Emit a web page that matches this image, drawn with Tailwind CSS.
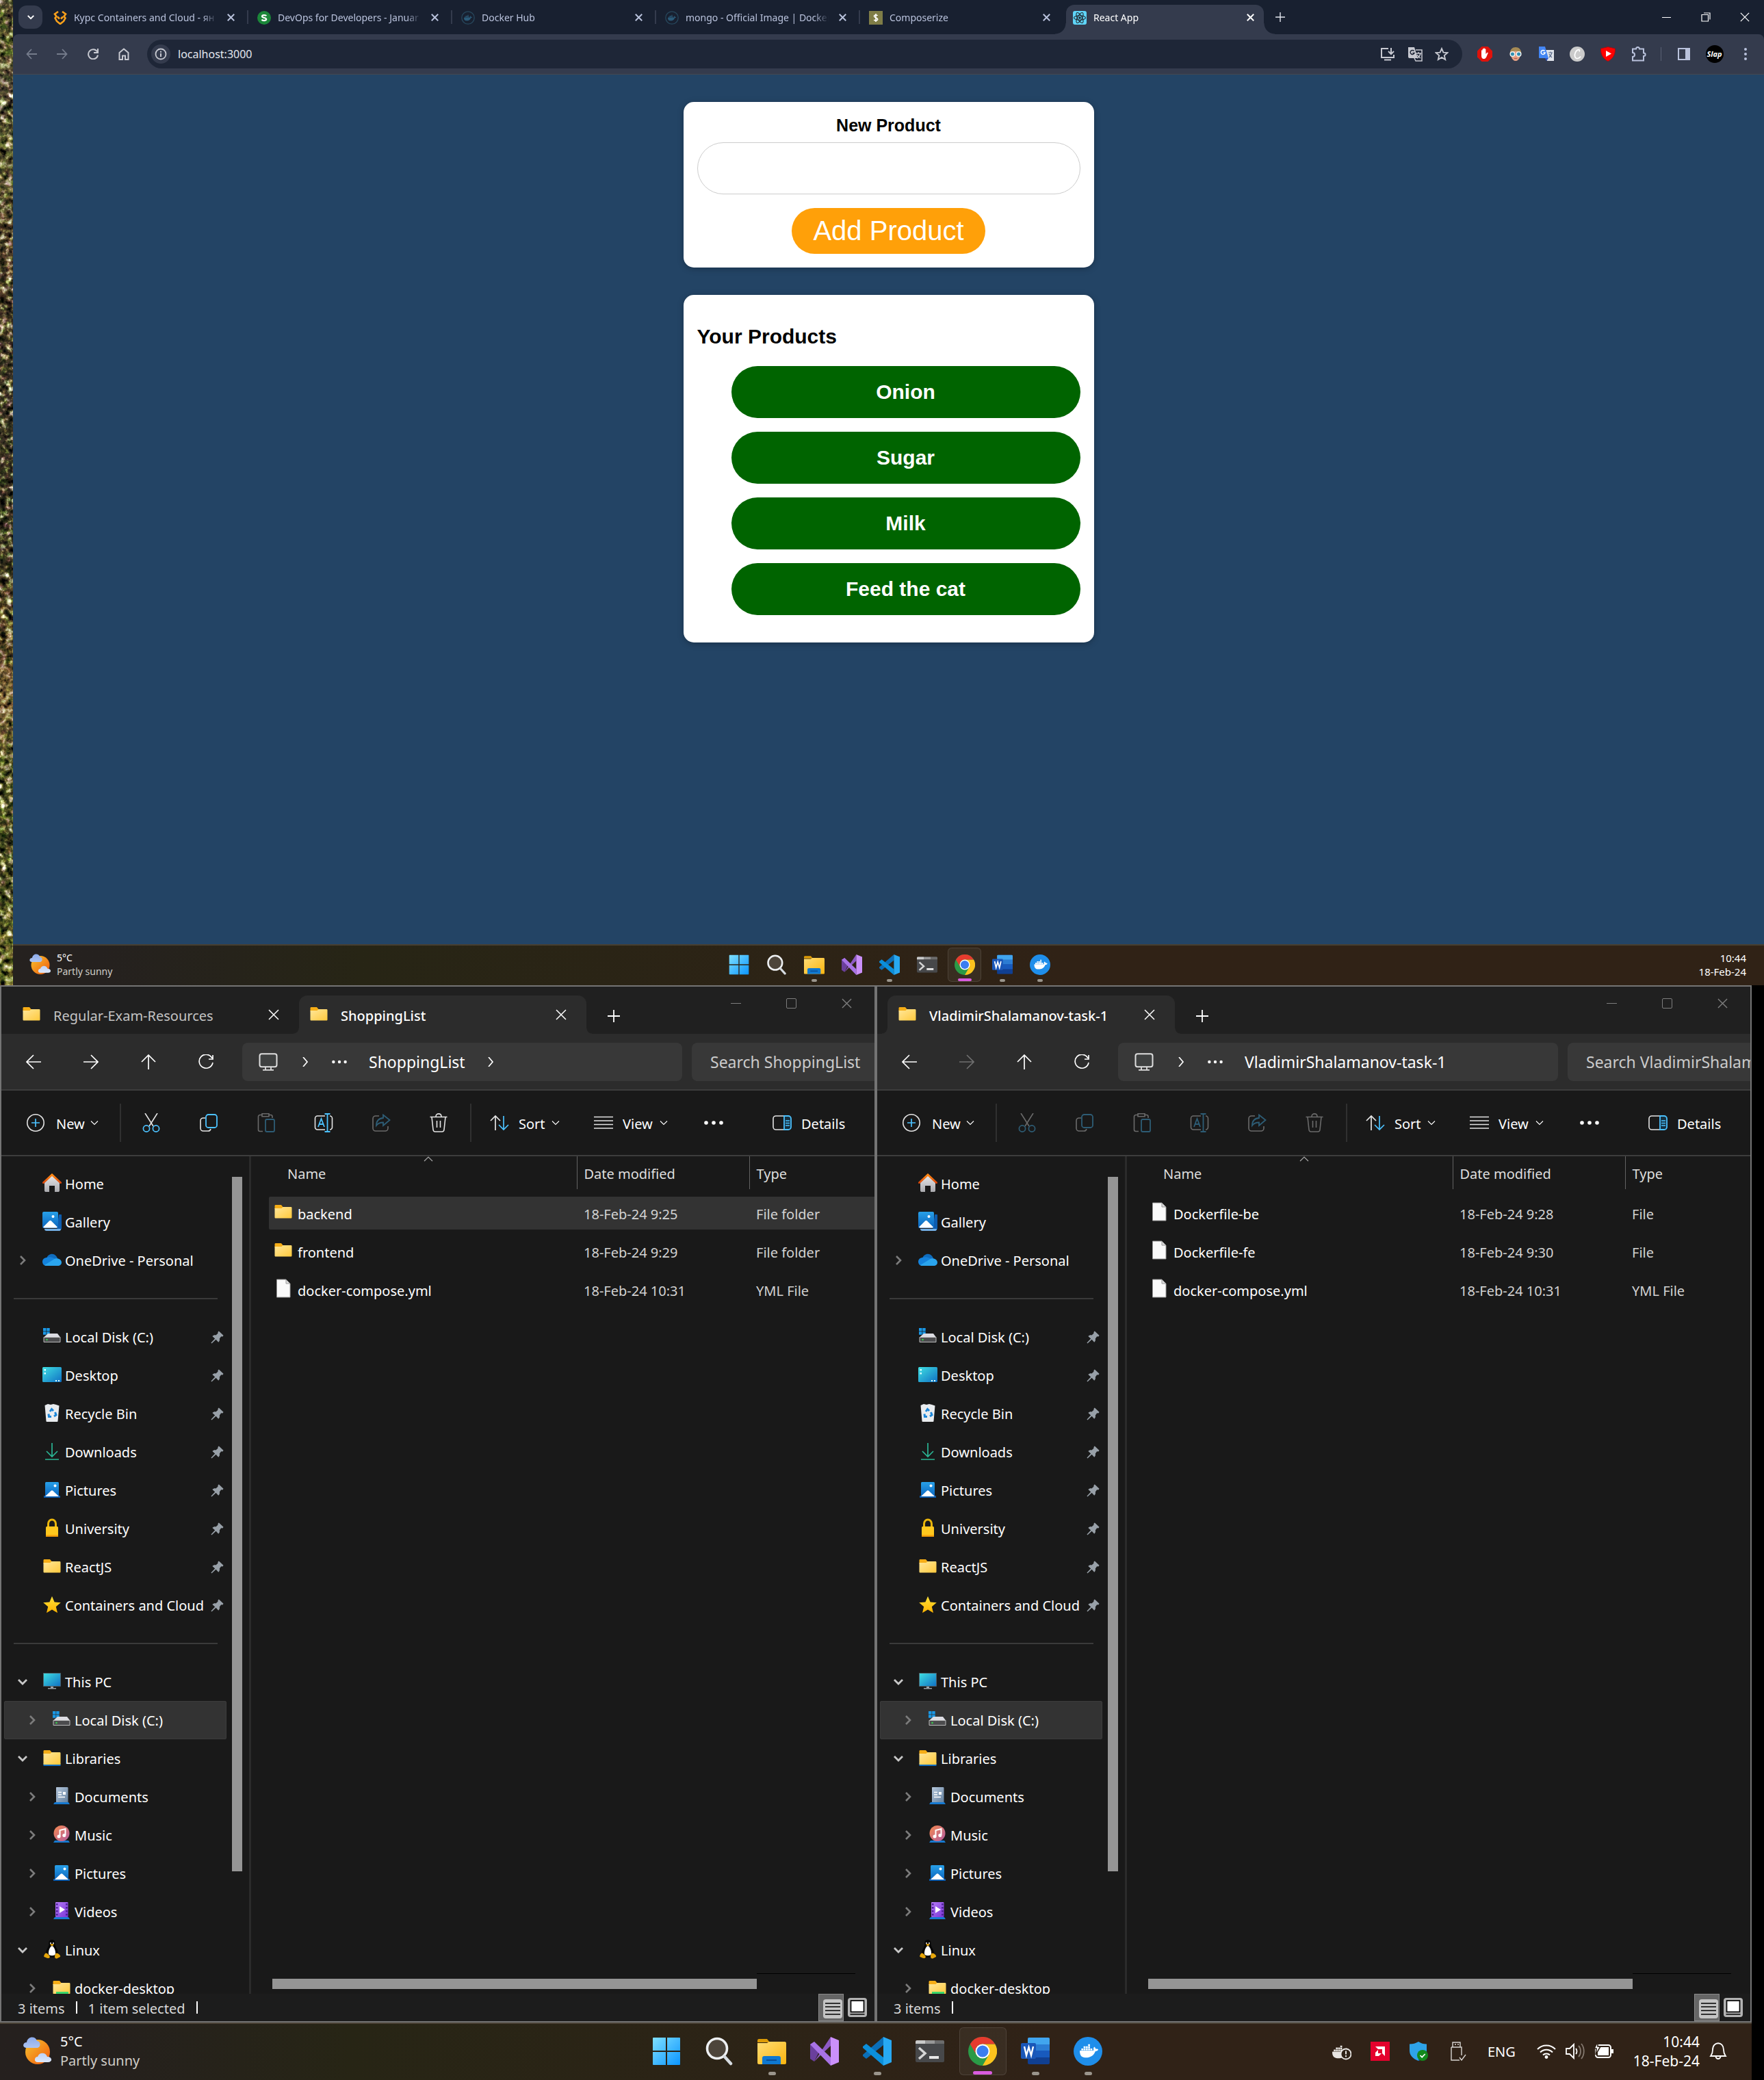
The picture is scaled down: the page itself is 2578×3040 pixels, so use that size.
<!DOCTYPE html>
<html lang="en">
<head>
<meta charset="utf-8">
<title>React App</title>
<script src="https://cdn.jsdelivr.net/npm/@tailwindcss/browser@4"></script>
</head>
<body class="grid h-screen grid-rows-[minmax(0,9fr)_minmax(0,10fr)] overflow-hidden bg-black font-['Noto_Sans',sans-serif] text-white">

<!-- Icon library -->
<svg class="absolute size-0" aria-hidden="true">
  <defs>
    <linearGradient id="g-folder" x1="0" y1="0" x2="1" y2="1"><stop offset="0" stop-color="#ffe79b"/><stop offset="1" stop-color="#ffc93c"/></linearGradient>
    <linearGradient id="g-explorer" x1="0" y1="0" x2="1" y2="1"><stop offset="0" stop-color="#ffdd75"/><stop offset="1" stop-color="#fbb50f"/></linearGradient>
    <linearGradient id="g-blue" x1="0" y1="0" x2="0" y2="1"><stop offset="0" stop-color="#28a0e8"/><stop offset="1" stop-color="#0a63bd"/></linearGradient>
    <linearGradient id="g-desk" x1="0" y1="0" x2="1" y2="1"><stop offset="0" stop-color="#3fe0e2"/><stop offset="1" stop-color="#1070c4"/></linearGradient>
    <linearGradient id="g-win" x1="0" y1="0" x2="1" y2="1"><stop offset="0" stop-color="#7fe0ff"/><stop offset="1" stop-color="#0b95ff"/></linearGradient>
    <linearGradient id="g-gray" x1="0" y1="0" x2="0" y2="1"><stop offset="0" stop-color="#e8e8ea"/><stop offset="1" stop-color="#a9a9ad"/></linearGradient>
    <linearGradient id="g-roof" x1="0" y1="0" x2="0" y2="1"><stop offset="0" stop-color="#ff8a14"/><stop offset="1" stop-color="#d9480b"/></linearGradient>
    <linearGradient id="g-music" x1="0" y1="0" x2="1" y2="1"><stop offset="0" stop-color="#f5894f"/><stop offset="1" stop-color="#b45ca0"/></linearGradient>
    <linearGradient id="g-video" x1="0" y1="0" x2="1" y2="1"><stop offset="0" stop-color="#b57bf5"/><stop offset="1" stop-color="#7a34d8"/></linearGradient>
    <linearGradient id="g-doc" x1="0" y1="0" x2="1" y2="1"><stop offset="0" stop-color="#b5c7dc"/><stop offset="1" stop-color="#64819f"/></linearGradient>
    <linearGradient id="g-sun" x1="0" y1="0" x2="1" y2="1"><stop offset="0" stop-color="#f7c52f"/><stop offset="1" stop-color="#f0580c"/></linearGradient>
    <linearGradient id="g-cloud" x1="0" y1="0" x2="0" y2="1"><stop offset="0" stop-color="#8cabeb"/><stop offset="1" stop-color="#dbe7fa"/></linearGradient>
    <linearGradient id="g-star" x1="0" y1="0" x2="0" y2="1"><stop offset="0" stop-color="#ffe23a"/><stop offset="1" stop-color="#ffb300"/></linearGradient>
    <linearGradient id="g-forest" x1="0" y1="0" x2="0" y2="1">
      <stop offset="0" stop-color="#5a5138"/><stop offset=".05" stop-color="#6b6c38"/><stop offset=".08" stop-color="#54493c"/><stop offset=".15" stop-color="#626238"/>
      <stop offset=".25" stop-color="#5a4632"/><stop offset=".38" stop-color="#443a2c"/><stop offset=".55" stop-color="#403a28"/><stop offset=".66" stop-color="#66542f"/>
      <stop offset=".71" stop-color="#8a6c44"/><stop offset=".78" stop-color="#55562a"/><stop offset=".88" stop-color="#505028"/><stop offset="1" stop-color="#7c7c34"/>
    </linearGradient>
    <filter id="leaves" x="0" y="0" width="100%" height="100%" color-interpolation-filters="sRGB">
      <feTurbulence type="fractalNoise" baseFrequency=".11" numOctaves="4" seed="4" result="n"/>
      <feColorMatrix in="n" values="1.5 .8 0 0 -.68  1.3 1 0 0 -.68  1.3 .7 .2 0 -.68  0 0 0 0 1" result="m"/>
      <feBlend in="m" in2="SourceGraphic" mode="hard-light"/>
    </filter>
  </defs>

  <symbol id="whale" viewBox="0 0 24 24"><path fill="currentColor" d="M13.983 11.078h2.119a.186.186 0 00.186-.185V9.006a.186.186 0 00-.186-.186h-2.119a.185.185 0 00-.185.185v1.888c0 .102.083.185.185.185m-2.954-5.43h2.118a.186.186 0 00.186-.186V3.574a.186.186 0 00-.186-.185h-2.118a.185.185 0 00-.185.185v1.888c0 .102.082.185.185.185m0 2.716h2.118a.187.187 0 00.186-.186V6.29a.186.186 0 00-.186-.185h-2.118a.185.185 0 00-.185.185v1.887c0 .102.082.185.185.186m-2.93 0h2.12a.186.186 0 00.184-.186V6.29a.185.185 0 00-.185-.185H8.1a.185.185 0 00-.185.185v1.887c0 .102.083.185.185.186m-2.964 0h2.119a.186.186 0 00.185-.186V6.29a.185.185 0 00-.185-.185H5.136a.186.186 0 00-.186.185v1.887c0 .102.084.185.186.186m5.893 2.715h2.118a.186.186 0 00.186-.185V9.006a.186.186 0 00-.186-.186h-2.118a.185.185 0 00-.185.185v1.888c0 .102.082.185.185.185m-2.93 0h2.12a.185.185 0 00.184-.185V9.006a.185.185 0 00-.184-.186h-2.12a.185.185 0 00-.184.185v1.888c0 .102.083.185.185.185m-2.964 0h2.119a.185.185 0 00.185-.185V9.006a.185.185 0 00-.184-.186h-2.12a.186.186 0 00-.186.186v1.887c0 .102.084.185.186.185m-2.92 0h2.12a.185.185 0 00.184-.185V9.006a.185.185 0 00-.184-.186h-2.12a.185.185 0 00-.184.185v1.888c0 .102.082.185.185.185M23.763 9.89c-.065-.051-.672-.51-1.954-.51-.338.001-.676.03-1.01.087-.248-1.7-1.653-2.53-1.716-2.566l-.344-.199-.226.327c-.284.438-.49.922-.612 1.43-.23.97-.09 1.882.403 2.661-.595.332-1.55.413-1.744.42H.751a.751.751 0 00-.75.748 11.376 11.376 0 00.692 4.062c.545 1.428 1.355 2.48 2.41 3.124 1.18.723 3.1 1.137 5.275 1.137.983.003 1.963-.086 2.93-.266a12.248 12.248 0 003.823-1.389c.98-.567 1.86-1.288 2.61-2.136 1.252-1.418 1.998-2.997 2.553-4.4h.221c1.372 0 2.215-.549 2.68-1.009.309-.293.55-.65.707-1.046l.098-.288Z"/></symbol>

  <!-- Favicons -->
  <symbol id="fav-softuni" viewBox="0 0 20 20"><path fill="none" stroke="#f9a01b" stroke-width="2.600" d="M7 1 2 4.500l2.500 3.500L2.500 10.500l2.500 4.500 5 4 5-4 2.500-4.500L15.500 8 18 4.500 13 1M6 8.500 9 11.500M14 8.500l-3 3"/></symbol>
  <symbol id="fav-s" viewBox="0 0 20 20"><circle cx="10" cy="10" r="10" fill="#1b8739"/><path fill="none" stroke="#fff" stroke-width="2.200" d="M13.200 7.300C12.500 5.800 7 5.300 7 7.900s6.200 1.500 6.200 4.200-5.700 2.300-6.500.4"/></symbol>
  <symbol id="fav-docker" viewBox="0 0 20 20"><circle cx="10" cy="10" r="9.200" fill="none" stroke="#27475c" stroke-width="1.300"/><use href="#whale" x="4" y="4" width="12" height="12" color="#2b5a78"/></symbol>
  <symbol id="fav-dollar" viewBox="0 0 20 20"><path fill="#7f7d47" d="M0 0h20v20H0z"/><path fill="none" stroke="#fff" stroke-width="1.600" d="M12.500 7C12 5.500 7.500 5.500 7.500 7.800s5.200 1.900 5.200 4.300-4.700 2.400-5.300.6M10 4v12"/></symbol>
  <symbol id="fav-react" viewBox="0 0 20 20"><rect width="20" height="20" rx="3" fill="#5fd5f8"/><g fill="none" stroke="#20232a" stroke-width="1.100"><ellipse cx="10" cy="10" rx="8.500" ry="3.300"/><ellipse cx="10" cy="10" rx="8.500" ry="3.300" transform="rotate(60 10 10)"/><ellipse cx="10" cy="10" rx="8.500" ry="3.300" transform="rotate(120 10 10)"/></g><circle cx="10" cy="10" r="1.700" fill="#20232a"/></symbol>

  <!-- Line icons -->
  <symbol id="x" viewBox="0 0 16 16"><path fill="none" stroke="currentColor" stroke-width="1.500" d="m1 1 14 14M15 1 1 15"/></symbol>
  <symbol id="x-b" viewBox="0 0 10 10"><path fill="none" stroke="currentColor" stroke-width="1.800" d="m.7.7 8.600 8.600M9.300.7.7 9.300"/></symbol>
  <symbol id="plus" viewBox="0 0 16 16"><path fill="none" stroke="currentColor" stroke-width="1.600" d="M8 0v16M0 8h16"/></symbol>
  <symbol id="down" viewBox="0 0 12 12"><path fill="none" stroke="currentColor" stroke-width="1.100" d="m1 3.500 5 5 5-5"/></symbol>
  <symbol id="down-b" viewBox="0 0 14 14"><path fill="none" stroke="currentColor" stroke-width="2.800" d="m1 4 6 6 6-6"/></symbol>
  <symbol id="right-b" viewBox="0 0 14 14"><path fill="none" stroke="currentColor" stroke-width="2.600" d="m4 1 6 6-6 6"/></symbol>
  <symbol id="right" viewBox="0 0 14 14"><path fill="none" stroke="currentColor" stroke-width="1.700" d="m4 0 6 7-6 7"/></symbol>
  <symbol id="arrow-l" viewBox="0 0 22 22"><path fill="none" stroke="currentColor" stroke-width="1.700" d="M22 11H1M11 1 1 11l10 10"/></symbol>
  <symbol id="arrow-r" viewBox="0 0 22 22"><path fill="none" stroke="currentColor" stroke-width="1.700" d="M0 11h21M11 1l10 10-10 10"/></symbol>
  <symbol id="arrow-u" viewBox="0 0 22 22"><path fill="none" stroke="currentColor" stroke-width="1.700" d="M11 22V1M1 11 11 1l10 10"/></symbol>
  <symbol id="reload" viewBox="0 0 22 22"><path fill="none" stroke="currentColor" stroke-width="1.700" d="M20 5.500A10 10 0 1 0 21 12M21 1v6h-6"/></symbol>
  <symbol id="ch-l" viewBox="0 0 16 16"><path fill="none" stroke="currentColor" stroke-width="1.800" d="M16 8H1.500M8 1 1.500 8 8 15"/></symbol>
  <symbol id="ch-r" viewBox="0 0 16 16"><path fill="none" stroke="currentColor" stroke-width="1.800" d="M0 8h14.500M8 1l6.500 7L8 15"/></symbol>
  <symbol id="ch-reload" viewBox="0 0 16 16"><path fill="none" stroke="currentColor" stroke-width="2" d="M14 4.500a7 7 0 1 0 1 5M15 0v6H9"/></symbol>
  <symbol id="ch-home" viewBox="0 0 16 18"><path fill="none" stroke="currentColor" stroke-width="2" d="M1.500 7 8 1.500 14.500 7v10H10v-5.500H6V17H1.500z"/></symbol>
  <symbol id="info" viewBox="0 0 18 18"><circle cx="9" cy="9" r="7.500" fill="none" stroke="currentColor" stroke-width="1.800"/><path stroke="currentColor" stroke-width="2" d="M9 8v5M9 4.800v2"/></symbol>
  <symbol id="install" viewBox="0 0 22 20"><path fill="none" stroke="currentColor" stroke-width="2" d="M12 2H2v13h18v-4M16 1v9m-4-4 4 4 4-4M6 18.500h10"/></symbol>
  <symbol id="translate" viewBox="0 0 22 22"><path fill="#c7c9d1" d="M1 1h9l5 16H3a2 2 0 0 1-2-2z"/><path fill="none" stroke="#c7c9d1" stroke-width="1.500" d="M12 5h9v16h-9l-2-4M12 10h8M16 8v2m3 0c-1 4-3 6-5 7m0-5c1 2 2 3 5 5"/><path fill="none" stroke="#1e2637" stroke-width="1.500" d="M9.500 6.500a3 3 0 1 0 .5 3H7.500"/></symbol>
  <symbol id="star-o" viewBox="0 0 20 20"><path fill="none" stroke="currentColor" stroke-width="1.900" d="m10 2 2.400 5.600 6 .5-4.600 4 1.400 5.900L10 14.900 4.800 18l1.400-5.900-4.600-4 6-.5z"/></symbol>
  <symbol id="adblock" viewBox="0 0 22 22"><path fill="#e0120b" d="M6.500 0h9L22 6.500v9L15.500 22h-9L0 15.500v-9z"/><path fill="#fff" d="M6 11V6c0-1 1.500-1 1.500 0V4c0-1 1.600-1 1.600 0V3c0-1 1.700-1 1.700 0v1c0-1 1.600-1 1.600 0v7l1.800-2c1-.8 1.900 0 1.300 1-1.500 3-2.500 8-5.500 8S6 16 6 13z"/></symbol>
  <symbol id="face" viewBox="0 0 22 22"><path fill="#a58a55" d="M2 10C2 3 6 0 11 0s9 3 9 10l-1 4H3z"/><path fill="#e4a184" d="M4 9c2-4 12-4 14 0v6c-1 4-4 7-7 7s-6-3-7-7z"/><g fill="#2f8fb0" stroke="#f2f2f2" stroke-width="1.600"><circle cx="6" cy="11" r="3.600"/><circle cx="16" cy="11" r="3.600"/></g><path stroke="#b3534c" stroke-width="1.300" d="M8.500 18h5"/></symbol>
  <symbol id="gtrans" viewBox="0 0 22 22"><path fill="#dfe3ea" d="M9 5h13v16H12z"/><path fill="#4486f4" d="M0 0h9l5 17H1a1 1 0 0 1-1-1z"/><path fill="#2a50c8" d="M9 17h5l-3 4z"/><path fill="none" stroke="#fff" stroke-width="1.500" d="M8.500 6.500a3 3 0 1 0 .6 2.500H6.500"/><path fill="none" stroke="#5b6b8a" stroke-width="1.200" d="M14 9h6m-3-1.500V9m2 0c-1 4-2 5-4 7m0-5c1 2 3 4 4 5"/></symbol>
  <symbol id="cglyph" viewBox="0 0 22 22"><circle cx="11" cy="11" r="11" fill="#cbcbcb"/><path fill="none" stroke="#fff" stroke-width="1.700" d="M14 7.500c2-4-3-4-5.500 1S8 18 11.500 17.500s4-2 4.500-3"/></symbol>
  <symbol id="ytshield" viewBox="0 0 22 22"><path fill="#f00" stroke="#991016" stroke-width="1" d="M11 .5 21.500 3c.5 9-4 15.500-10.500 18.500C4.500 18.500 0 12 .5 3z"/><path fill="#fff" d="m8 6 8 4.500L8 15z"/></symbol>
  <symbol id="puzzle" viewBox="0 0 22 22"><path fill="none" stroke="#b9c2dc" stroke-width="2" d="M2 3.500h5c0-3.500 5-3.500 5 0h6v6c3.500 0 3.500 4.500 0 4.500v6.500H2v-5.500c4 0 4-6 0-6z"/></symbol>
  <symbol id="sidepanel" viewBox="0 0 18 18"><rect x="1" y="1" width="16" height="16" fill="none" stroke="#b9c2dc" stroke-width="2"/><path fill="#b9c2dc" d="M11 1h6v16h-6z"/></symbol>

  <!-- Explorer toolbar -->
  <symbol id="monitor" viewBox="0 0 28 26"><rect x="1.500" y="1.200" width="25" height="19" rx="3" fill="#3f4141" stroke="#dedede" stroke-width="2"/><path stroke="#dedede" stroke-width="1.800" d="M10 21v3m8-3v3M6 24.800h16"/></symbol>
  <symbol id="dots" viewBox="0 0 28 28"><g fill="currentColor"><circle cx="3" cy="14" r="2.800"/><circle cx="14" cy="14" r="2.800"/><circle cx="25" cy="14" r="2.800"/></g></symbol>
  <symbol id="new" viewBox="0 0 28 28"><circle cx="14" cy="14" r="12.200" fill="none" stroke="#e4e4e4" stroke-width="1.600"/><path stroke="#4cc2ff" stroke-width="1.700" d="M14 8v12M8 14h12"/></symbol>
  <symbol id="cut" viewBox="0 0 28 28"><path stroke="#e4e4e4" stroke-width="1.600" d="m5 0 12 19M23 0 11 19"/><g fill="none" stroke="#4cc2ff" stroke-width="1.700"><circle cx="7" cy="22.500" r="4.600"/><circle cx="21" cy="22.500" r="4.600"/></g></symbol>
  <symbol id="copy" viewBox="0 0 28 28"><path fill="none" stroke="#e4e4e4" stroke-width="1.600" d="M9 7H6a4 4 0 0 0-4 4v11a4 4 0 0 0 4 4h7a4 4 0 0 0 4-3"/><rect x="10" y="2" width="16" height="19" rx="3.500" fill="none" stroke="#4cc2ff" stroke-width="1.800"/></symbol>
  <symbol id="paste" viewBox="0 0 28 28"><path fill="none" stroke="#e4e4e4" stroke-width="1.600" d="M9 26.500H5a2.500 2.500 0 0 1-2.500-2.500V5A2.500 2.500 0 0 1 5 2.500h3m10 0h3A2.500 2.500 0 0 1 23 5v2M8 .8h10v4H8z"/><rect x="13" y="9" width="13" height="18" rx="2" fill="none" stroke="#4cc2ff" stroke-width="1.800"/></symbol>
  <symbol id="rename" viewBox="0 0 28 28"><path fill="none" stroke="#e4e4e4" stroke-width="1.600" d="M16 4H5a3.500 3.500 0 0 0-3.500 3.500v13A3.500 3.500 0 0 0 5 24h11m7-20a3.500 3.500 0 0 1 3.500 3.500v13A3.500 3.500 0 0 1 23 24"/><path fill="none" stroke="#4cc2ff" stroke-width="1.800" d="m6 20 4.500-12L15 20m-7.500-4h6M19.500 1v26M15.500 1h8m-8 26h8"/></symbol>
  <symbol id="share" viewBox="0 0 28 28"><path fill="none" stroke="#e4e4e4" stroke-width="1.600" d="M11 4H6a4 4 0 0 0-4 4v14a4 4 0 0 0 4 4h14a4 4 0 0 0 4-4v-3"/><path fill="none" stroke="#4cc2ff" stroke-width="1.800" d="M17 2.500 26.500 10 17 18v-4.500c-5 0-7.500 1-10 4.500 0-7 3.500-10.500 10-11z"/></symbol>
  <symbol id="trash" viewBox="0 0 28 28"><path fill="none" stroke="#e4e4e4" stroke-width="1.600" d="M1.500 5.500h25M10 5c0-5.500 8-5.500 8 0M4 5.500 6 24c.2 2 1 3 3 3h10c2 0 2.800-1 3-3l2-18.500M11.500 11v10M16.500 11v10"/></symbol>
  <symbol id="sort" viewBox="0 0 28 24"><path fill="none" stroke="#e4e4e4" stroke-width="1.700" d="M8 23V2M1 9l7-7 7 7"/><path fill="none" stroke="#4cc2ff" stroke-width="1.700" d="M20 2v20m-7-7 7 7 7-7"/></symbol>
  <symbol id="view" viewBox="0 0 28 20"><path stroke="#e4e4e4" stroke-width="1.600" d="M0 1.500h28M0 7h28M0 12.500h28M0 18h28"/></symbol>
  <symbol id="details" viewBox="0 0 28 22"><path fill="none" stroke="#e4e4e4" stroke-width="1.600" d="M17 1H5a4 4 0 0 0-4 4v12a4 4 0 0 0 4 4h12"/><path fill="#15303f" stroke="#4cc2ff" stroke-width="1.800" d="M17 1h6a4 4 0 0 1 4 4v12a4 4 0 0 1-4 4h-6z"/><path stroke="#4cc2ff" stroke-width="1.500" d="M19 8h6M19 11.500h6M19 15h6"/></symbol>

  <!-- File and place icons -->
  <symbol id="folder" viewBox="0 0 28 28"><path fill="#f5ad16" d="M1.500 5.500c0-1 .5-1.500 1.500-1.500h8l2.500 3H25v3H1.500z"/><path fill="url(#g-folder)" d="M1.500 9h10l2-2H25c1 0 1.500.5 1.500 1.500V22c0 1-.5 1.500-1.500 1.500H3c-1 0-1.500-.5-1.500-1.500z"/></symbol>
  <symbol id="file" viewBox="0 0 28 28"><path fill="#fafafa" stroke="#9a9a9a" d="M4.500 1h13.500l6 6v20h-19.500z"/><path fill="#dcdcdc" stroke="#9a9a9a" d="M18 1v6h6z"/></symbol>
  <symbol id="home" viewBox="0 0 28 28"><path fill="url(#g-gray)" d="M3 12 14 3l11 9v13c0 1.500-1 2-2 2h-5v-9h-8v9H5c-1 0-2-.5-2-2z"/><path fill="none" stroke="url(#g-roof)" stroke-width="3" stroke-linecap="round" d="M1.500 13.500 14 2l12.500 11.500"/></symbol>
  <symbol id="gallery" viewBox="0 0 28 28"><path fill="#0d5cae" d="M24 4h3c.6 0 1 .4 1 1v19c0 2-1 3-3 3h-4z"/><path fill="#74b0e6" d="M3 25h24c0 2-1 3-2 3H6c-2 0-3-1-3-3z"/><rect width="23" height="24" rx="2" fill="url(#g-blue)"/><path fill="#fff" d="m1 22.500 9-9c1-1 2-1 3 0l9 9c-1 1-1.500 1-2.500 1h-16c-1 0-2-.5-2.500-1z"/><circle cx="15.500" cy="7" r="2" fill="#fff"/></symbol>
  <symbol id="onedrive" viewBox="0 0 28 28"><path fill="#0f6cbd" d="M6 12C8 5 17 3 21 10l2 4-9 6z"/><path fill="#1482dc" d="M6 11C2 11.500 0 14 0 17s2 6 6 6l14-9C16 10 10 9.500 6 11z"/><path fill="#2aa5ee" d="M3 22 16 14c3-3 10-2 11.500 2 1.500 4-1 7-5 7H6c-1 0-2 0-3-1z"/></symbol>
  <symbol id="disk" viewBox="0 0 28 28"><path fill="#1a98e6" d="M1 2h4.500v4.500H1zm5.200 0h4.500v4.500H6.200zM1 7.200h4.500v4.500H1zm5.200 0h4.500v4.500H6.200z"/><path fill="#dcdce2" d="M8 10h14l4.500 6h-25z"/><path fill="#4c4c4e" stroke="#bababa" d="M2 15.500h24v7H2z"/><circle cx="6.500" cy="19" r="1.300" fill="#37d04c"/></symbol>
  <symbol id="desktop" viewBox="0 0 28 28"><rect y="3" width="28" height="22" rx="1.500" fill="url(#g-desk)"/><path fill="#dff" d="M2.500 6h2.500v2.500H2.500zm0 5h2.500v2.500H2.500zM19 22h2v2h-2zm4 0h2v2h-2z"/></symbol>
  <symbol id="recycle" viewBox="0 0 28 28"><path fill="#e9ecef" d="M3.500 3 8 1l4 1 4-1 4 1 4.500 1.500L22.500 26c0 .8-.5 1-1.500 1H7c-1 0-1.500-.2-1.500-1z"/><g fill="none" stroke="#1c86d8" stroke-width="3"><path d="m11 12 2.500-3.500L16 11M18.500 13l1.500 4-3 2M13 19.500H9.500l-.5-4"/></g></symbol>
  <symbol id="download" viewBox="0 0 28 28"><path fill="none" stroke="#2bb594" stroke-width="1.700" d="M14 2v20M6 14l8 8 8-8M4 26h20"/></symbol>
  <symbol id="picture" viewBox="0 0 28 28"><path fill="#0b58a8" d="M2 23h24v3H2z"/><rect x="4" y="3" width="20" height="22" rx="1.500" fill="url(#g-blue)"/><path fill="#fff" d="m4 24 8.500-8c1-1 2-1 3 0l8.500 8z"/><circle cx="18.500" cy="8.500" r="2" fill="#fff"/></symbol>
  <symbol id="lock" viewBox="0 0 28 28"><path fill="none" stroke="#e9b50b" stroke-width="3" d="M8.500 13V8a5.500 6 0 0 1 11 0v5"/><rect x="5" y="12" width="18" height="15" rx="1.500" fill="#ffc81e"/><path fill="#f59f0a" d="M5 24.500h18V27H5z"/></symbol>
  <symbol id="star" viewBox="0 0 28 28"><path fill="url(#g-star)" d="m14 2 3.600 8.400 9.200.8-7 6 2.200 9L14 21.500 6 26.200l2.200-9-7-6 9.200-.8z"/></symbol>
  <symbol id="pc" viewBox="0 0 28 28"><path fill="#9aa0a6" d="M12 22h4v2h4v1.500H8V24h4z"/><rect x="1.500" y="2.500" width="25" height="19" fill="url(#g-desk)" stroke="#566069" stroke-width=".8"/></symbol>
  <symbol id="library" viewBox="0 0 28 28"><path fill="#0f6fc4" d="M1.500 22h25v4h-25z"/><path fill="#f5ad16" d="M1.500 4.500c0-1 .5-1.500 1.500-1.500h8l2.500 3H25v3H1.500z"/><path fill="url(#g-folder)" d="M1.500 8h10l2-2H25c1 0 1.500.5 1.500 1.500V24h-25z"/></symbol>
  <symbol id="document" viewBox="0 0 28 28"><path fill="#1679d0" d="M4 23h20l2 3H2z"/><path fill="url(#g-doc)" d="M7 1h15c1 0 1.500.5 1.500 1.500V23H6V2c0-.6.400-1 1-1z"/><path stroke="#fff" stroke-width="1.500" d="M9 8.500h5M9 12h5M9 15.500h10"/><path fill="#fff" d="M16 8h4v4h-4z"/></symbol>
  <symbol id="music" viewBox="0 0 28 28"><path fill="#1679d0" d="M4 23h20l2 3H2z"/><circle cx="14" cy="12.500" r="11.500" fill="url(#g-music)"/><path fill="none" stroke="#fff" stroke-width="2" d="M11.500 17V8l8-2v9"/><g fill="#fff"><circle cx="10" cy="17" r="2.500"/><circle cx="17.800" cy="15.500" r="2.500"/></g></symbol>
  <symbol id="video" viewBox="0 0 28 28"><path fill="#1679d0" d="M4 23h20l2 3H2z"/><rect x="5" y="1" width="18.500" height="22" rx="1" fill="url(#g-video)"/><path stroke="#4d2096" stroke-width="2.600" stroke-dasharray="2.600 2.400" d="M7.200 3v20M21.400 3v20"/><path fill="#fff" d="m11 7 8 5-8 5z"/></symbol>
  <symbol id="tux" viewBox="0 0 28 28"><path fill="#050505" d="M14 0c-4 0-5 3-4.500 7C9 11 4 16 5 22c2 5 16 5 18 0 1-6-4-11-4.500-15C19 3 18 0 14 0z"/><path fill="#fff" d="M14 9c-3 1-5.500 7-5 12 1 3 9 3 10 0 .5-5-2-11-5-12z"/><g fill="#e5a50a"><path d="M11 7c1.500-1.500 4.500-1.500 6 0l-3 2.500zM5 19.500c2-.5 5 3 6 5.500-1 3-4 2-6 1s-3-.5-2.800-2 1.300-4 2.800-4.500zM21 19.500c2 .5 4 2 5 4s-2 2-4 3.500-4 0-4-2.500c0-2 1-5 3-5z"/></g><circle cx="12" cy="5" r="1" fill="#fff"/><circle cx="16" cy="5" r="1" fill="#fff"/></symbol>
  <symbol id="share-folder" viewBox="0 0 28 28"><use href="#folder" width="28" height="28"/><path fill="#39d66a" d="M6 20h18v6H6z"/></symbol>
  <symbol id="pin" viewBox="0 0 20 20"><path fill="#98a0a8" d="M12.500.5 19.500 7c-.6 1.800-2 2.200-3.500 1.800L13.500 12c.5 2.300 0 4-1.700 5.500L8 13.500 1.500 19.500.5 18.500 6.500 12 2.500 8.500C4 6.800 6 6.300 7.800 6.800L11 4C10.700 2.500 11.200 1.200 12.500.5z"/></symbol>
  <symbol id="list-mode" viewBox="0 0 28 28"><rect width="28" height="28" rx="4" fill="#c4c4c4"/><path stroke="#000" stroke-width="1.700" d="M3 6h22M3 11h22M3 16.500h22M3 22h22"/></symbol>
  <symbol id="thumb-mode" viewBox="0 0 28 28"><rect width="28" height="28" rx="4" fill="#b3b3b3"/><rect x="4.500" y="4" width="19" height="16.500" fill="#fff" stroke="#000" stroke-width="1.700"/><path stroke="#000" stroke-width="1.500" d="M3.500 24h21"/></symbol>

  <!-- Taskbar apps -->
  <symbol id="weather" viewBox="0 0 42 40"><circle cx="21" cy="22" r="18" fill="url(#g-sun)"/><path fill="url(#g-cloud)" d="M5 16c-7 0-6-8 0-8 1-9 13-10 15-2 6 0 6 10 0 10zM21 37c-6 0-5-8 0-8 2-7 12-7 14 0 8 0 8 8 1 8z"/></symbol>
  <symbol id="app-windows" viewBox="0 0 42 42"><path fill="url(#g-win)" d="M1 2a1 1 0 0 1 1-1h18v19H1zM22 1h18a1 1 0 0 1 1 1v18H22zM1 22h19v19H2a1 1 0 0 1-1-1zM22 22h19v18a1 1 0 0 1-1 1H22z"/></symbol>
  <symbol id="app-search" viewBox="0 0 42 42"><circle cx="18" cy="17" r="14.500" fill="#4d453b" stroke="#eef0f2" stroke-width="3.600"/><path stroke="#d6dbe0" stroke-width="4.500" stroke-linecap="round" d="m29 29 9 10"/></symbol>
  <symbol id="app-explorer" viewBox="0 0 42 42"><path fill="#dc9b07" d="M0 5c0-1 1-2 2-2h12l4 5H0z"/><path fill="url(#g-explorer)" d="M0 9h14l3-2h23c1 0 2 1 2 2v29c0 1-1 2-2 2H2c-1 0-2-1-2-2z"/><path fill="#0f78d0" d="M7 40V31c0-2 1-3 3-3h21c2 0 3 1 3 3v9z"/><path stroke="#0a4d95" stroke-width="2" d="M13 34h15"/></symbol>
  <symbol id="app-vs" viewBox="0 0 42 42"><path fill="#6a3f9c" d="M0 11 6 7l9 11-9 18-6-4z"/><path fill="#8d5ac4" d="M6 36 30 0v13L14 28z"/><path fill="#a873e6" d="M0 11 6 7l24 23v12z"/><path fill="#cb90fa" d="m30 0 12 5v32l-12 5z"/></symbol>
  <symbol id="app-vscode" viewBox="0 0 42 42"><path fill="#0b6fb8" d="M30 0v12L5 32l-5-4v-2z"/><path fill="#0b8fdb" d="M0 14v2l30 26V30L5 10z"/><path fill="#27a9f3" d="m30 0 12 5v32l-12 5z"/></symbol>
  <symbol id="app-terminal" viewBox="0 0 42 42"><rect y="5" width="42" height="32" rx="2" fill="#47484a"/><path fill="#c9c9c9" d="M0 7c0-1 1-2 2-2h12v5H0z"/><path fill="#979797" d="M14 5h14v5H14z"/><path fill="#6c6c6c" d="M28 5h12c1 0 2 1 2 2v3H28z"/><path fill="none" stroke="#d6d6d6" stroke-width="3.500" d="m5 16 9 8-9 8"/><path fill="#e6e6e6" d="M20 28h14v4H20z"/></symbol>
  <symbol id="app-chrome" viewBox="0 0 24 24"><circle cx="12" cy="12" r="12" fill="#2a9a46"/><path fill="#fcc31e" d="M12 6h10.400A12 12 0 0 1 12 24l5.200-9z"/><path fill="#e63b2e" d="M12 6h10.400A12 12 0 0 0 1.600 6l5.200 9A6 6 0 0 1 12 6z"/><circle cx="12" cy="12" r="6" fill="#fff"/><circle cx="12" cy="12" r="4.900" fill="#3a7df0"/></symbol>
  <symbol id="app-word" viewBox="0 0 42 42"><rect x="10" y="1" width="32" height="39" rx="2" fill="#103f91"/><path fill="#185abd" d="M10 20h32v10H10z"/><path fill="#2b7cd3" d="M10 11h32v9H10z"/><path fill="#41a5ee" d="M12 1h28a2 2 0 0 1 2 2v8H10V3a2 2 0 0 1 2-2z"/><rect y="9" width="22" height="23" rx="2" fill="#1a57b8"/><path fill="none" stroke="#fff" stroke-width="2.400" d="m5 14 3 13 3.500-12L15 27l3-13"/></symbol>
  <symbol id="app-docker" viewBox="0 0 42 42"><circle cx="21" cy="21" r="21" fill="#1f8eea"/><use href="#whale" x="7" y="7" width="31" height="27" color="#fff"/></symbol>

  <!-- Tray -->
  <symbol id="tray-docker" viewBox="0 0 28 28"><use href="#whale" x="0" y="2" width="26" height="26" color="#e8e5e2"/><circle cx="20" cy="18" r="7.500" fill="#2f2217" stroke="#e8e5e2" stroke-width="1.800"/><path stroke="#e8e5e2" stroke-width="2" d="M20 13.500v5M20 20v2.300"/></symbol>
  <symbol id="tray-amd" viewBox="0 0 28 28"><path fill="#e4022d" d="M0 0h28v28H0z"/><path fill="#fff" d="M7 7h14v14l-4-4v-6h-6zM11 12v5h5l-4 4H7v-5z"/></symbol>
  <symbol id="tray-shield" viewBox="0 0 28 28"><path fill="#2ea3e8" d="M14 0c4 2.500 7 3.500 12 3.500V13c0 7-5 12-12 15C6 25 1 20 1 13V3.500C6 3.500 10 2.500 14 0z"/><path fill="#0c5aa8" d="M14 14h12c-.5 6-5 11-12 14z"/><circle cx="20" cy="20" r="8" fill="#128a1c"/><path fill="none" stroke="#fff" stroke-width="1.700" d="m16.500 20 2.700 2.700 4.500-4.700"/></symbol>
  <symbol id="tray-usb" viewBox="0 0 28 28"><path fill="none" stroke="#d8d5d2" stroke-width="1.400" d="M8 8V1h11v7M6 8h15v12M6 8v19h12m0-4 3 4 6-8M11 4h2m2 0h2"/></symbol>
  <symbol id="tray-wifi" viewBox="0 0 28 28"><g fill="none" stroke="#fff" stroke-width="2"><path d="M1 11a18 18 0 0 1 26 0M5 15.500a12.500 12.500 0 0 1 18 0M9 19.500a7 7 0 0 1 10 0"/></g><circle cx="14" cy="22.500" r="2.400" fill="#fff"/></symbol>
  <symbol id="tray-vol" viewBox="0 0 28 28"><path fill="none" stroke="#fff" stroke-width="1.800" d="M1 10h5l6-6v20l-6-6H1zM15 10c2 2 2 6 0 8"/><path fill="none" stroke="#84796f" stroke-width="1.800" d="M19 6c4 4 4 12 0 16M23 3c5 6 5 16 0 22"/></symbol>
  <symbol id="tray-bat" viewBox="0 0 28 28"><rect x="2" y="5" width="22" height="18" rx="3.500" fill="none" stroke="#fff" stroke-width="2"/><path fill="#fff" d="M5 8h16v12H5zM25 11h3v6h-3z"/><path fill="#fff" stroke="#2f2217" stroke-width="1.600" d="M5 0 0 10h3l-1 9 7-12H5z"/></symbol>
  <symbol id="tray-bell" viewBox="0 0 26 26"><path fill="none" stroke="#fff" stroke-width="1.800" d="M2 20c2-3 3-4 3-9 0-13 16-13 16 0 0 5 1 6 3 9zM9.500 21c1 4 6 4 7 0"/></symbol>
</svg>

<!-- Upper monitor -->
<section class="flex min-h-0">
  <svg class="h-full w-[19px] shrink-0" aria-hidden="true"><rect width="100%" height="100%" fill="url(#g-forest)" filter="url(#leaves)"/></svg>
  <div class="flex min-w-0 flex-1 flex-col">

    <!-- Browser tab strip -->
    <div class="flex h-[50px] shrink-0 items-center bg-[#182030] pl-2 text-[14px] text-[#b9c2dc]">
      <button class="mr-[6px] flex h-[34px] w-[35px] items-center justify-center rounded-xl bg-[#343b4d] text-white" aria-label="Search tabs"><svg class="size-[10px]"><use href="#down-b"/></svg></button>
      <div id="browser-tabs" class="flex h-full pt-[7px]"></div>
      <button class="ml-[17px] text-[#e3e6ee]" aria-label="New tab"><svg class="size-[14px]"><use href="#plus"/></svg></button>
      <div class="ml-auto flex items-center pr-[21px] text-white">
        <button class="flex w-[57px] justify-center" aria-label="Minimize"><span class="h-px w-[13px] bg-white"></span></button>
        <button class="flex w-[57px] justify-center" aria-label="Restore"><svg class="size-[14px]" viewBox="0 0 14 14"><path fill="none" stroke="#fff" stroke-width="1.200" d="M1 3.500h9.500V13H1zM4 1h9v9.500"/></svg></button>
        <button class="ml-[22px]" aria-label="Close"><svg class="size-[14px]"><use href="#x"/></svg></button>
      </div>
    </div>

    <!-- Browser toolbar -->
    <div class="shrink-0 bg-[#182030]">
      <div class="flex h-[59px] items-center rounded-t-lg border-b border-[#46484f] bg-[#343b4d] pl-1 text-[#c7c9d1]">
        <button class="flex w-[45px] justify-center text-[#757c8c]" aria-label="Back"><svg class="size-4"><use href="#ch-l"/></svg></button>
        <button class="flex w-[45px] justify-center text-[#757c8c]" aria-label="Forward"><svg class="size-4"><use href="#ch-r"/></svg></button>
        <button class="flex w-[45px] justify-center" aria-label="Reload"><svg class="size-4"><use href="#ch-reload"/></svg></button>
        <button class="flex w-[45px] justify-center" aria-label="Home"><svg class="h-[18px] w-4"><use href="#ch-home"/></svg></button>
        <div class="ml-3 flex h-[42px] min-w-0 flex-1 items-center rounded-full bg-[#1e2637] pl-[6px] pr-5">
          <button class="flex size-7 shrink-0 items-center justify-center rounded-full bg-[#343b4d]" aria-label="View site information"><svg class="size-[18px]"><use href="#info"/></svg></button>
          <input class="ml-[11px] min-w-0 flex-1 bg-transparent text-[16px] text-[#e3e6ee] outline-none" aria-label="Address and search bar" value="localhost:3000">
          <div class="flex gap-[18px]">
            <button aria-label="Install app"><svg class="h-5 w-[22px]"><use href="#install"/></svg></button>
            <button aria-label="Translate this page"><svg class="size-[22px]"><use href="#translate"/></svg></button>
            <button aria-label="Bookmark this tab"><svg class="size-5"><use href="#star-o"/></svg></button>
          </div>
        </div>
        <div class="ml-[10px] flex items-center pr-[5px]">
          <button class="flex w-[45px] justify-center" aria-label="Ad blocker"><svg class="size-[22px]"><use href="#adblock"/></svg></button>
          <button class="flex w-[45px] justify-center" aria-label="Avatar extension"><svg class="size-5"><use href="#face"/></svg></button>
          <button class="flex w-[45px] justify-center" aria-label="Translate extension"><svg class="size-[22px]"><use href="#gtrans"/></svg></button>
          <button class="flex w-[45px] justify-center" aria-label="Custom cursor"><svg class="size-[22px]"><use href="#cglyph"/></svg></button>
          <button class="flex w-[45px] justify-center" aria-label="Video ad blocker"><svg class="size-[22px]"><use href="#ytshield"/></svg></button>
          <button class="flex w-[45px] justify-center" aria-label="Extensions"><svg class="size-[22px]"><use href="#puzzle"/></svg></button>
          <span class="mx-[10px] h-5 w-px bg-[#596174]"></span>
          <button class="flex w-[45px] justify-center" aria-label="Side panel"><svg class="size-[18px]"><use href="#sidepanel"/></svg></button>
          <button class="flex w-[45px] justify-center" aria-label="Profile"><span class="flex size-[26px] items-center justify-center rounded-full bg-black text-[11px] font-bold italic text-white">Slap</span></button>
          <button class="flex w-[45px] justify-center" aria-label="Menu"><svg class="h-[18px] w-1" viewBox="0 0 4 18"><g fill="#b9c2dc"><circle cx="2" cy="2" r="2"/><circle cx="2" cy="9" r="2"/><circle cx="2" cy="16" r="2"/></g></svg></button>
        </div>
      </div>
    </div>

    <!-- Product list app -->
    <main class="flex min-h-0 flex-1 flex-col items-center gap-10 bg-[#234465] pt-10 font-['Liberation_Sans',Arial,sans-serif] text-black">
      <form class="flex w-[600px] flex-col items-center rounded-[15px] bg-white p-5 shadow-[0_2px_10px_rgba(0,0,0,0.26)]" onsubmit="return false">
        <label for="product" class="mb-[10px] text-[25px] leading-[29px] font-bold">New Product</label>
        <input id="product" type="text" class="h-[76px] w-full rounded-full border border-[#ccc] px-6 text-[30px]">
        <button class="mt-5 h-[67px] rounded-full bg-[#ffa009] px-[31px] pb-[2px] text-[40px] leading-[46px] text-white">Add Product</button>
      </form>
      <section class="w-[600px] rounded-[15px] bg-white px-5 pt-11 pb-10 shadow-[0_2px_10px_rgba(0,0,0,0.26)]">
        <h2 class="mb-[26px] text-[30px] leading-[34px] font-bold">Your Products</h2>
        <ul class="flex flex-col gap-5 pl-[50px] text-center text-[30px] leading-[76px] font-bold text-white">
          <li class="rounded-full bg-[#006400]">Onion</li>
          <li class="rounded-full bg-[#006400]">Sugar</li>
          <li class="rounded-full bg-[#006400]">Milk</li>
          <li class="rounded-full bg-[#006400]">Feed the cat</li>
        </ul>
      </section>
    </main>

    <!-- Upper taskbar -->
    <footer class="grid h-[60px] shrink-0 grid-cols-[1fr_auto_1fr] items-center border-t-2 border-[#473f30] bg-linear-to-r from-[#25211f] from-5% via-[#272515] via-20% to-[#302216] to-60% pb-[2px] text-[14px] leading-5">
      <div class="flex items-center gap-2 pl-6">
        <svg class="mb-[2px] h-[30px] w-8"><use href="#weather"/></svg>
        <div><p>5°C</p><p class="text-[#cfcdc8]">Partly sunny</p></div>
      </div>
      <nav id="taskbar-small" class="flex pl-[2px]" aria-label="Taskbar apps"></nav>
      <div class="pr-[26px] text-right text-[15px]"><p>10:44</p><p>18-Feb-24</p></div>
    </footer>
  </div>
</section>

<!-- Lower monitor -->
<section class="flex min-h-0 flex-col pr-[18px]">
  <div id="explorers" class="grid min-h-0 flex-1 grid-cols-2"></div>
  <footer class="grid h-[84px] shrink-0 grid-cols-[1fr_auto_1fr] items-center border-t-2 border-[#4b4236] bg-linear-to-r from-[#25201e] from-5% via-[#272515] via-20% to-[#302217] to-60% pb-[2px] text-[20px] leading-7">
    <div class="flex items-center gap-3 pl-[34px]">
      <svg class="mb-[2px] h-10 w-[42px]"><use href="#weather"/></svg>
      <div><p>5°C</p><p class="text-[#cfcdc8]">Partly sunny</p></div>
    </div>
    <nav id="taskbar-large" class="flex pl-1" aria-label="Taskbar apps"></nav>
    <div class="flex items-center justify-end pr-9">
      <svg class="mr-7 size-7"><use href="#tray-docker"/></svg>
      <svg class="mr-7 size-7"><use href="#tray-amd"/></svg>
      <svg class="mr-7 size-7"><use href="#tray-shield"/></svg>
      <svg class="mr-[31px] size-7"><use href="#tray-usb"/></svg>
      <span class="mr-[31px] pt-[2px]">ENG</span>
      <svg class="mr-[14px] size-7"><use href="#tray-wifi"/></svg>
      <svg class="mr-[14px] size-7"><use href="#tray-vol"/></svg>
      <svg class="mr-[29px] size-7"><use href="#tray-bat"/></svg>
      <div class="mr-[14px] text-right text-[21px]"><p>10:44</p><p>18-Feb-24</p></div>
      <svg class="size-[26px]"><use href="#tray-bell"/></svg>
    </div>
  </footer>
</section>

<script>
const icon = (id, cls) => `<svg class="${cls}"><use href="#${id}"/></svg>`;

// Browser tabs
const tabs = [
  ['softuni', 'Курс Containers and Cloud - ян'],
  ['s', 'DevOps for Developers - Januar'],
  ['docker', 'Docker Hub'],
  ['docker', 'mongo - Official Image | Docker'],
  ['dollar', 'Composerize'],
  ['react', 'React App'],
];
document.getElementById('browser-tabs').innerHTML = tabs.map(([fav, title], i) => {
  const active = i === tabs.length - 1;
  return `<div class="relative flex w-[289px] items-center pl-[10px] pb-[6px] ${active ? 'rounded-t-xl bg-[#343b4d] text-white' : ''}">
    ${active ? '<span class="absolute bottom-0 -left-4 size-4 bg-[radial-gradient(circle_at_0_0,transparent_15px,#343b4d_16px)]"></span><span class="absolute bottom-0 -right-4 size-4 bg-[radial-gradient(circle_at_100%_0,transparent_15px,#343b4d_16px)]"></span>' : ''}
    ${icon('fav-' + fav, 'size-5 shrink-0')}
    <span class="ml-[10px] w-[209px] overflow-hidden whitespace-nowrap mask-r-from-90%">${title}</span>
    <button class="ml-[15px]" aria-label="Close tab">${icon('x-b', 'size-[11px]')}</button>
  </div>${i < tabs.length - 2 ? '<span class="ml-1 mr-[3px] mt-2 h-5 w-[2px] bg-[#343b4d]"></span>' : active ? '' : '<span class="w-[9px]"></span>'}`;
}).join('');

// Taskbars
const apps = [['windows', 'Start'], ['search', 'Search'], ['explorer', 'File Explorer', 1], ['vs', 'Visual Studio'], ['vscode', 'Visual Studio Code', 1],
  ['terminal', 'Terminal'], ['chrome', 'Google Chrome', 2], ['word', 'Word', 1], ['docker', 'Docker Desktop', 1]];
const marks = {
  small: ['', 'absolute bottom-0 h-1 w-2 rounded-full bg-[#9a958c]', 'absolute bottom-0 h-1 w-5 rounded-full bg-[#d95cdf]'],
  large: ['', 'absolute bottom-0 h-[5px] w-[11px] rounded-full bg-[#9a958c]', 'absolute bottom-0 h-[5px] w-7 rounded-full bg-[#d95cdf]'],
};
document.getElementById('taskbar-small').innerHTML = apps.map(([id, name, run = 0]) =>
  `<button class="relative mx-[3px] flex h-[50px] w-[49px] items-center justify-center rounded-md ${run === 2 ? 'border border-white/10 bg-white/5' : ''}" aria-label="${name}">
    ${icon('app-' + id, 'size-[30px]')}<span class="${marks.small[run]}"></span></button>`).join('');
document.getElementById('taskbar-large').innerHTML = apps.map(([id, name, run = 0]) =>
  `<button class="relative mx-[4px] flex h-[70px] w-[69px] items-center justify-center rounded-md ${run === 2 ? 'border border-white/10 bg-white/5' : ''}" aria-label="${name}">
    ${icon('app-' + id, 'size-[42px]')}<span class="${marks.large[run]}"></span></button>`).join('');

// Explorer navigation tree: [icon, label, kind]
const tree = [
  ['home', 'Home'], ['gallery', 'Gallery'], ['onedrive', 'OneDrive - Personal', 'closed'], null,
  ['disk', 'Local Disk (C:)', 'pin'], ['desktop', 'Desktop', 'pin'], ['recycle', 'Recycle Bin', 'pin'], ['download', 'Downloads', 'pin'],
  ['picture', 'Pictures', 'pin'], ['lock', 'University', 'pin'], ['folder', 'ReactJS', 'pin'], ['star', 'Containers and Cloud', 'pin'], null,
  ['pc', 'This PC', 'open'], ['disk', 'Local Disk (C:)', 'current'], ['library', 'Libraries', 'open'],
  ['document', 'Documents', 'child'], ['music', 'Music', 'child'], ['picture', 'Pictures', 'child'], ['video', 'Videos', 'child'],
  ['tux', 'Linux', 'open'], ['share-folder', 'docker-desktop', 'child'],
];
const treeRow = row => {
  if (!row) return '<li class="flex h-14 items-center"><span class="ml-[14px] h-[2px] w-[298px] bg-[#3a3a3a]"></span></li>';
  const [id, label, kind = ''] = row;
  const nested = kind === 'child' || kind === 'current';
  return `<li><a href="#" class="flex h-14 w-[325px] items-center whitespace-nowrap ${kind === 'current' ? 'rounded-xs border border-[#3c3c3c] bg-[#333] pl-[33px]' : nested ? 'pl-[34px]' : 'pl-5'}">
    <span class="w-[36px] shrink-0">${kind === 'open' ? icon('down-b', 'size-[14px] text-[#c8c8c8]') : nested || kind === 'closed' ? icon('right-b', 'size-[14px] text-[#7c7c7c]') : ''}</span>
    ${icon(id, 'mb-[2px] size-7 shrink-0')}<span class="ml-[5px] pt-[2px]">${label}</span>
    ${kind === 'pin' ? icon('pin', 'ml-auto mr-1 size-[19px] shrink-0') : ''}
  </a></li>`;
};

const explorer = w => `
<article class="flex min-h-0 min-w-0 flex-col overflow-hidden border-2 border-[#747474] bg-[#191919] text-[20px] leading-7">
  <div class="flex h-[69px] shrink-0 bg-[#202020] pl-[15px]">
    ${w.tabs.map((t, i) => {
      const on = i === w.tabs.length - 1;
      return `<div class="relative mt-[13px] flex w-[420px] items-center pl-[15px] ${on ? 'rounded-t-xl bg-[#2c2c2c] font-medium' : 'text-[#c4c4c4]'}">
        ${on ? '<span class="absolute bottom-0 -left-2 size-2 bg-[radial-gradient(circle_at_0_0,transparent_7px,#2c2c2c_8px)]"></span><span class="absolute bottom-0 -right-2 size-2 bg-[radial-gradient(circle_at_100%_0,transparent_7px,#2c2c2c_8px)]"></span>' : ''}
        ${icon('folder', 'mb-[2px] size-7')}<span class="ml-[18px] flex-1 pt-1">${t}</span>
        <button class="mr-[29px] text-white" aria-label="Close tab">${icon('x', 'size-4')}</button></div>`;
    }).join('')}
    <button class="mt-[34px] ml-[31px] self-start" aria-label="New tab">${icon('plus', 'size-[18px]')}</button>
    <div class="ml-auto flex h-12 items-center text-[#7d7d7d]">
      <button class="flex w-[81px] justify-center" aria-label="Minimize"><span class="h-px w-[15px] bg-[#7d7d7d]"></span></button>
      <button class="flex w-[81px] justify-center" aria-label="Maximize"><span class="size-[15px] rounded-xs border border-[#7d7d7d]"></span></button>
      <button class="flex w-[81px] justify-center" aria-label="Close">${icon('x', 'size-[15px]')}</button>
    </div>
  </div>
  <div class="flex h-[83px] shrink-0 items-center border-b-2 border-[#3d3d3d] bg-[#2c2c2c] pl-[5px] text-[23px]">
    <button class="flex w-[84px] justify-center" aria-label="Back">${icon('arrow-l', 'size-[22px]')}</button>
    <button class="flex w-[84px] justify-center ${w.forward ? '' : 'text-[#6f6f6f]'}" aria-label="Forward">${icon('arrow-r', 'size-[22px]')}</button>
    <button class="flex w-[84px] justify-center" aria-label="Up">${icon('arrow-u', 'size-[22px]')}</button>
    <button class="flex w-[84px] justify-center" aria-label="Refresh">${icon('reload', 'size-[22px]')}</button>
    <div class="ml-[11px] flex h-14 min-w-0 flex-1 items-center rounded-lg bg-[#383838] pl-6">
      ${icon('monitor', 'h-[26px] w-7')}${icon('right', 'ml-[33px] size-[14px]')}${icon('dots', 'ml-8 size-[22px]')}
      <span class="ml-8">${w.path}</span>${w.forward ? icon('right', 'ml-[30px] size-[14px]') : ''}
    </div>
    <input class="ml-[14px] h-14 w-[267px] shrink-0 rounded-l-lg bg-[#383838] pl-[27px] outline-none placeholder:text-[#cbcbcb]" aria-label="Search" placeholder="Search ${w.path}">
  </div>
  <div class="flex h-24 shrink-0 items-center border-b-2 border-[#3d3d3d]">
    <button class="flex w-[173px] items-center pl-9">${icon('new', 'size-7')}<span class="ml-4 pt-1">New</span>${icon('down', 'ml-2 size-3')}</button>
    <span class="mr-[2px] h-14 w-[2px] bg-[#303030]"></span>
    ${[['cut', 'Cut'], ['copy', 'Copy'], ['paste', 'Paste'], ['rename', 'Rename'], ['share', 'Share'], ['trash', 'Delete']].map(([id, name]) =>
      `<button class="flex w-[84px] justify-center ${w.disabled.includes(id) ? 'opacity-40' : ''}" aria-label="${name}">${icon(id, 'size-7')}</button>`).join('')}
    <span class="ml-1 h-14 w-[2px] bg-[#303030]"></span>
    <button class="flex w-[152px] items-center pl-[27px]">${icon('sort', 'h-6 w-7')}<span class="ml-[14px] pt-1">Sort</span>${icon('down', 'ml-[9px] size-3')}</button>
    <button class="flex w-[160px] items-center pl-[27px]">${icon('view', 'h-5 w-7')}<span class="ml-[14px] pt-1">View</span>${icon('down', 'ml-[10px] size-3')}</button>
    <button class="flex w-[84px] justify-center" aria-label="See more">${icon('dots', 'size-7')}</button>
    <button class="flex items-center pl-11">${icon('details', 'h-[22px] w-7')}<span class="ml-[14px] pt-1">Details</span></button>
  </div>
  <div class="flex min-h-0 flex-1 overflow-hidden">
    <nav class="w-[337px] shrink-0 overflow-hidden pt-[12px] pl-1" aria-label="Folders"><ul>${tree.map(treeRow).join('')}</ul></nav>
    <div class="w-[25px] shrink-0 pt-[30px]"><div class="h-[85%] w-[15px] bg-[#959595]"></div></div>
    <div class="flex min-w-0 flex-1 flex-col border-l-[3px] border-[#2b2b2b] pl-[26px]">
      <table class="w-full table-fixed text-left">
        <colgroup><col class="w-[450px]"><col class="w-[252px]"><col></colgroup>
        <thead class="text-[#dedede]"><tr class="h-12">
          <th class="relative border-r border-[#636363] pt-1 pl-[27px] font-normal"><svg class="absolute top-0 left-[226px] h-2 w-[14px]" viewBox="0 0 14 8"><path fill="none" stroke="#a8a8a8" stroke-width="1.200" d="m1 7 6-6 6 6"/></svg>Name</th>
          <th class="border-r border-[#636363] pt-1 pl-[10px] font-normal">Date modified</th>
          <th class="pt-1 pl-[10px] font-normal">Type</th></tr></thead>
        <tbody><tr class="h-[7px]"><td colspan="3"></td></tr>${w.files.map(([id, name, date, type], i) => {
          const bg = w.selected === i ? 'bg-[#333]' : '';
          return `<tr class="h-14">
            <td class="p-0"><div class="flex h-12 items-center rounded-l-xs pl-[7px] ${bg}">${icon(id, 'mb-1 size-7')}<span class="ml-[7px] pt-[3px]">${name}</span></div></td>
            <td class="p-0 text-[#d2d2d2]"><div class="flex h-12 items-center pt-[3px] pl-[10px] ${bg}">${date}</div></td>
            <td class="p-0 text-[#d2d2d2]"><div class="flex h-12 items-center pt-[3px] pl-[10px] ${bg}">${type}</div></td></tr>`;
        }).join('')}</tbody>
      </table>
      <div class="mt-auto flex h-[30px] items-start">
        <div class="mt-2 ml-[5px] h-[15px] w-[80%] bg-[#959595]"></div><div class="h-px w-[144px] bg-black"></div>
      </div>
    </div>
  </div>
  <div class="flex h-10 shrink-0 items-center bg-[#1c1c1c] pl-6 text-[#dadada]">
    ${w.status.map(s => `<span class="pt-[3px]">${s}</span><span class="mx-4 h-[18px] w-[2px] bg-white"></span>`).join('')}
    <div class="ml-auto flex h-full items-center gap-[6px] pr-[11px]">
      <button class="flex h-full w-[37px] items-center justify-center border border-[#8a8a8a] bg-[#666]" aria-label="Details view">${icon('list-mode', 'ml-1 mt-1 size-7')}</button>
      <button aria-label="Thumbnail view">${icon('thumb-mode', 'size-7')}</button>
    </div>
  </div>
</article>`;

document.getElementById('explorers').innerHTML = [
  { tabs: ['Regular-Exam-Resources', 'ShoppingList'], path: 'ShoppingList', forward: true, disabled: ['paste', 'share'], selected: 0,
    files: [['folder', 'backend', '18-Feb-24 9:25', 'File folder'], ['folder', 'frontend', '18-Feb-24 9:29', 'File folder'], ['file', 'docker-compose.yml', '18-Feb-24 10:31', 'YML File']],
    status: ['3 items', '1 item selected'] },
  { tabs: ['VladimirShalamanov-task-1'], path: 'VladimirShalamanov-task-1', forward: false, disabled: ['cut', 'copy', 'paste', 'rename', 'share', 'trash'],
    files: [['file', 'Dockerfile-be', '18-Feb-24 9:28', 'File'], ['file', 'Dockerfile-fe', '18-Feb-24 9:30', 'File'], ['file', 'docker-compose.yml', '18-Feb-24 10:31', 'YML File']],
    status: ['3 items'] },
].map(explorer).join('');
</script>
</body>
</html>
